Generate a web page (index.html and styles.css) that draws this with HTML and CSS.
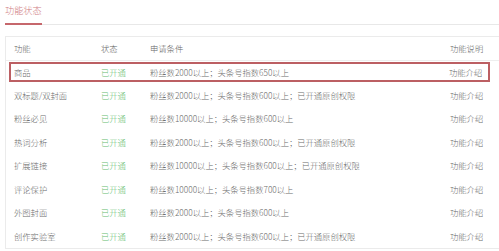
FILE: index.html
```html
<!DOCTYPE html>
<html lang="zh">
<head>
<meta charset="utf-8">
<link rel="stylesheet" href="styles.css">
</head>
<body>
<div class="page">
  <div class="tabs">
    <div class="tab active">功能状态</div>
  </div>
  <div class="table">
    <div class="row head">
      <span>功能</span><span>状态</span><span>申请条件</span><span class="right">功能说明</span>
    </div>
    <div class="row mark">
      <span>商品</span><span class="on">已开通</span><span>粉丝数2000以上；头条号指数650以上</span><span class="right">功能介绍</span>
    </div>
    <div class="row">
      <span>双标题/双封面</span><span class="on">已开通</span><span>粉丝数2000以上；头条号指数600以上；已开通原创权限</span><span class="right">功能介绍</span>
    </div>
    <div class="row">
      <span>粉丝必见</span><span class="on">已开通</span><span>粉丝数10000以上；头条号指数600以上</span><span class="right">功能介绍</span>
    </div>
    <div class="row">
      <span>热词分析</span><span class="on">已开通</span><span>粉丝数2000以上；头条号指数600以上；已开通原创权限</span><span class="right">功能介绍</span>
    </div>
    <div class="row">
      <span>扩展链接</span><span class="on">已开通</span><span>粉丝数10000以上；头条号指数600以上；已开通原创权限</span><span class="right">功能介绍</span>
    </div>
    <div class="row">
      <span>评论保护</span><span class="on">已开通</span><span>粉丝数10000以上；头条号指数700以上</span><span class="right">功能介绍</span>
    </div>
    <div class="row">
      <span>外图封面</span><span class="on">已开通</span><span>粉丝数2000以上；头条号指数600以上</span><span class="right">功能介绍</span>
    </div>
    <div class="row">
      <span>创作实验室</span><span class="on">已开通</span><span>粉丝数2000以上；头条号指数600以上；已开通原创权限</span><span class="right">功能介绍</span>
    </div>
  </div>
</div>
</body>
</html>
```
FILE: styles.css
```css
html, body {
  margin: 0;
  padding: 0;
  background: #fff;
}
.page {
  font-family: "Noto Sans CJK SC", "Noto Sans", sans-serif;
  font-weight: 300;
  color: #6a6a6a;
  padding: 0 0 0 5px;
}
.tabs {
  border-bottom: 1px solid #e8e8e8;
  height: 24px;
  display: flex;
}
.tab {
  font-size: 9.2px;
  line-height: 12px;
  padding-top: 4px;
  color: #cf7c82;
  width: 37px;
  box-sizing: border-box;
}
.tab.active {
  border-bottom: 2px solid #c6676c;
  height: 25px;
}
.table {
  margin-top: 11px;
  border: 1px solid #ebebeb;
  border-right: none;
  font-size: 8.3px;
}
.row {
  display: grid;
  grid-template-columns: 87px 49px 299px auto;
  align-items: center;
  height: 23.5px;
  padding-left: 8px;
  white-space: nowrap;
}
.row.head {
  height: 22.5px;
  border-bottom: 1px solid #eeeeee;
  color: #666;
}
.row.mark {
  margin: 1px 9px 1.5px 3px;
  padding-left: 3px;
  height: 20px;
  border: 2px solid #bc5f63;
  box-sizing: border-box;
}
.row.mark .right { padding-left: 0; }
.on {
  color: #63bd6e;
}
.right {
  padding-left: 1px;
}
```
